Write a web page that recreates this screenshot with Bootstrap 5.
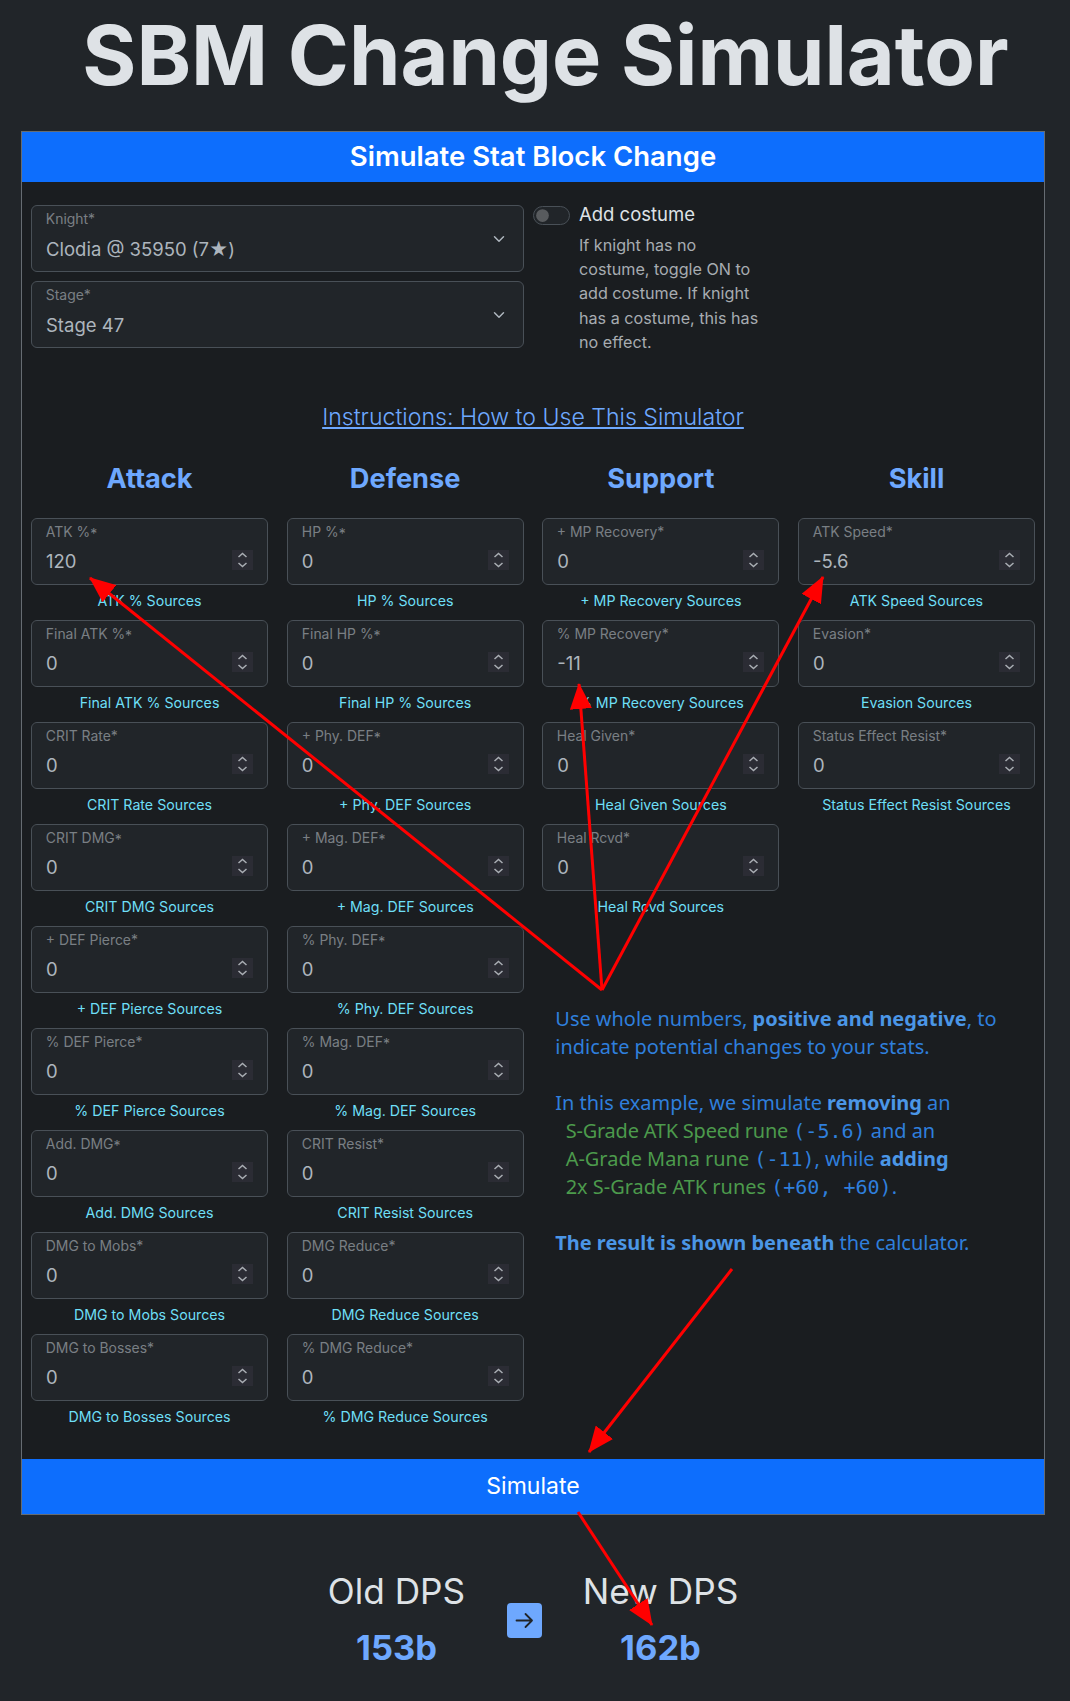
<!DOCTYPE html>
<html lang="en" data-bs-theme="dark">
<head>
    <meta charset="UTF-8">
    <title>SBM Change Simulator</title>
    <link href="https://cdn.jsdelivr.net/npm/bootstrap@5.3.0/dist/css/bootstrap.min.css" rel="stylesheet">
    <style>
        body {
            font-family: Inter, "Liberation Sans", sans-serif;
            background: #212529;
            color: #dee2e6;
            position: relative;
            height: 1701px;
            overflow: hidden;
        }
        .page-wrap { padding: 0 25px 0 21px; }
        .page-title {
            color: #dee2e6;
            font-size: 82.7px;
            font-weight: 700;
            line-height: 96px;
            text-align: center;
            margin: 7px 0 28px 25px;
            white-space: nowrap;
        }
        .sim-card { border-radius: 0; background: #1a1d20; border-color: #666c72; }
        .sim-head {
            background: #0d6efd;
            color: #fff;
            font-size: 27.5px;
            font-weight: 600;
            height: 50px;
            line-height: 48px;
            text-align: center;
        }
        .sim-body { padding: 23px 9px 23px 9px; }
        .top-row { display: flex; gap: 9px; height: 162px; }
        .top-left { width: 493px; display: flex; flex-direction: column; gap: 9px; }
        .form-floating > .form-select {
            height: 67px;
            min-height: 67px;
            font-size: 18.5px;
            padding: 31px 14px 8px;
            background-color: #212529;
            background-position: right 16px center;
        }
        .form-floating > .form-control,
        .form-floating > .form-control:not(:placeholder-shown) {
            height: 67px;
            min-height: 67px;
            font-size: 18.5px;
            padding: 30px 14px 10px 14px;
            background-color: #212529;
        }
        .form-floating > label {
            font-size: 16.4px;
            padding: 10.5px 14px;
        }
        .form-floating > .form-select ~ label,
        .form-floating > .form-control ~ label { color: #a9afb5; }
        .form-floating > .form-control::-webkit-inner-spin-button {
            -webkit-appearance: none;
            opacity: 1;
            width: 21px;
            height: 20px;
            margin: 0;
            background: #2b2c34 url("data:image/svg+xml,%3Csvg xmlns='http://www.w3.org/2000/svg' width='21' height='20' fill='none' stroke='%23a9adb3' stroke-width='1.5'%3E%3Cpath d='M6.5 7l4-3.5 4 3.5M6.5 13l4 3.5 4-3.5'/%3E%3C/svg%3E") center no-repeat;
        }
        .low-star { vertical-align: -.16em; line-height: 0; }
        .switch-col { width: 260px; margin-top: -2px; }
        .switch-line { display: flex; gap: 9px; align-items: center; font-size: 18.5px; height: 19px; }
        .switch-line .form-check-input { width: 37px; height: 19px; margin: 0; flex: none; }
        .switch-help { margin: 6px 0 0 46px; width: 190px; font-size: 16.15px; line-height: 24.2px; color: #a7acb1; }
        .how-to { text-align: center; font-size: 23.1px; font-weight: 300; line-height: 29px; margin: 35.5px 0 30px; }
        .stat-grid { display: grid; grid-template-columns: repeat(4, 237px); column-gap: 18.67px; }
        .stat-grid h3 {
            color: #6ea8fe;
            font-size: 27.2px;
            font-weight: 700;
            text-align: center;
            line-height: 34px;
            margin-bottom: 22px;
        }
        .stat-item { height: 102px; }
        .src-link { display: block; text-align: center; color: #6edff6; font-size: 14.2px; line-height: 18px; margin-top: 7px; text-decoration: none; }
        .col-notes { position: relative; padding: 79px 0 0 13px; }
        .note-text {
            font-family: "Noto Sans", sans-serif;
            font-size: 19.95px;
            line-height: 28px;
            color: #2f7fdc;
            margin: 0;
            white-space: pre;
        }
        .note-text b { color: #4b96e6; font-weight: 700; }
        .note-text i { font-style: normal; color: #4c9a4c; }
        .note-text .tight { letter-spacing: -.2px; }
        .note-text code { font-family: "DejaVu Sans Mono", monospace; font-size: 20px; color: #2f7fdc; }
        .sim-btn { border-radius: 0; font-size: 23px; height: 55px; display: block; width: 100%; }
        .dps-row { display: flex; justify-content: center; align-items: center; margin-top: 54px; }
        .dps-old { width: 220px; text-align: center; }
        .dps-new { width: 238px; text-align: center; }
        .dps-name { font-size: 35.2px; line-height: 44px; }
        .dps-val { font-size: 34.5px; font-weight: 700; color: #6ea8fe; line-height: 44px; margin-top: 13px; }
        .dps-arrow {
            width: 35px;
            height: 35px;
            background: #6ea8fe;
            border-radius: 4px;
            display: flex;
            align-items: center;
            justify-content: center;
            flex: none;
            margin-top: 3px;
        }
        .red-arrows { position: absolute; left: 0; top: 0; pointer-events: none; }
    </style>
</head>
<body>
    <div class="page-wrap">
        <h1 class="page-title">SBM Change Simulator</h1>
        <div class="card sim-card">
            <div class="sim-head">Simulate Stat Block Change</div>
            <div class="sim-body">
                <div class="top-row">
                    <div class="top-left">
                        <div class="form-floating">
                            <select class="form-select" id="knight"><option>Clodia @ 35950 (7★)</option></select>
                            <label for="knight">Knight*</label>
                        </div>
                        <div class="form-floating">
                            <select class="form-select" id="stage"><option>Stage 47</option></select>
                            <label for="stage">Stage*</label>
                        </div>
                    </div>
                    <div class="switch-col">
                        <div class="form-check form-switch switch-line p-0">
                            <input class="form-check-input" type="checkbox" id="costume">
                            <label for="costume">Add costume</label>
                        </div>
                        <p class="switch-help">If knight has no costume, toggle ON to add costume. If knight has a costume, this has no effect.</p>
                    </div>
                </div>
                <div class="how-to"><a href="#">Instructions: How to Use This Simulator</a></div>
                <div class="stat-grid" id="statGrid">
                    <h3>Attack</h3><h3>Defense</h3><h3>Support</h3><h3>Skill</h3>
                </div>
            </div>
            <button class="btn btn-primary sim-btn" type="button">Simulate</button>
        </div>
        <div class="dps-row">
            <div class="dps-old"><div class="dps-name">Old DPS</div><div class="dps-val">153b</div></div>
            <div class="dps-arrow">
                <svg width="21" height="21" viewBox="0 0 21 21" fill="none" stroke="#212529" stroke-width="1.8" stroke-linecap="round" stroke-linejoin="round"><path d="M2.5 10.5h15.5M11.5 4l6.5 6.5-6.5 6.5"/></svg>
            </div>
            <div class="dps-new"><div class="dps-name">New DPS</div><div class="dps-val">162b</div></div>
        </div>
    </div>

    <svg class="red-arrows" width="1070" height="1701" viewBox="0 0 1070 1701">
        <defs>
            <marker id="tip" markerUnits="userSpaceOnUse" markerWidth="26" markerHeight="22" refX="25" refY="11" orient="auto">
                <path d="M0 0L26 11L0 22z" fill="#f00"/>
            </marker>
        </defs>
        <g stroke="#f00" stroke-width="3" marker-end="url(#tip)">
            <line x1="602" y1="990" x2="90" y2="578"/>
            <line x1="602" y1="990" x2="579" y2="684"/>
            <line x1="602" y1="990" x2="823" y2="577"/>
            <line x1="732" y1="1269" x2="589" y2="1452"/>
            <line x1="578" y1="1512" x2="652" y2="1625"/>
        </g>
    </svg>

    <script>
        const cols = [
            ['ATK %', 'Final ATK %', 'CRIT Rate', 'CRIT DMG', '+ DEF Pierce', '% DEF Pierce', 'Add. DMG', 'DMG to Mobs', 'DMG to Bosses'],
            ['HP %', 'Final HP %', '+ Phy. DEF', '+ Mag. DEF', '% Phy. DEF', '% Mag. DEF', 'CRIT Resist', 'DMG Reduce', '% DMG Reduce'],
            ['+ MP Recovery', '% MP Recovery', 'Heal Given', 'Heal Rcvd'],
            ['ATK Speed', 'Evasion', 'Status Effect Resist']
        ];
        const values = { 'ATK %': 120, 'ATK Speed': -5.6, '% MP Recovery': -11 };
        const grid = document.getElementById('statGrid');

        function statCell(name, colIdx, rowIdx) {
            const div = document.createElement('div');
            div.className = 'stat-item';
            div.style.gridColumn = colIdx + 1;
            div.style.gridRow = rowIdx + 2;
            const id = 'f' + colIdx + '_' + rowIdx;
            // after a capital or % the asterisk sits lower
            const star = /[A-Z%]$/.test(name) ? '<span class="low-star">*</span>' : '*';
            div.innerHTML = `
                <div class="form-floating">
                    <input type="number" class="form-control" id="${id}" value="${values[name] || 0}">
                    <label for="${id}">${name}${star}</label>
                </div>
                <a class="src-link" href="#">${name} Sources</a>`;
            return div;
        }

        cols.forEach((names, c) => names.forEach((n, r) => grid.appendChild(statCell(n, c, r))));

        const notes = document.createElement('div');
        notes.className = 'col-notes';
        notes.style.gridRow = '6 / span 5';
        notes.style.gridColumn = '3 / span 2';
        notes.innerHTML = `<p class="note-text">Use whole numbers, <b>positive and negative</b>, to
indicate potential changes to your stats.

In this example, we simulate <b>removing</b> an
  <i class="tight">S-Grade ATK Speed rune</i> <code>(-5.6)</code> and an
  <i>A-Grade Mana rune</i> <code>(-11)</code>, while <b>adding</b>
  <i>2x S-Grade ATK runes</i> <code>(+60, +60)</code>.

<b>The result is shown beneath</b> the calculator.</p>`;
        grid.appendChild(notes);
    </script>
    <script src="https://cdn.jsdelivr.net/npm/bootstrap@5.3.0/dist/js/bootstrap.bundle.min.js"></script>
</body>
</html>
